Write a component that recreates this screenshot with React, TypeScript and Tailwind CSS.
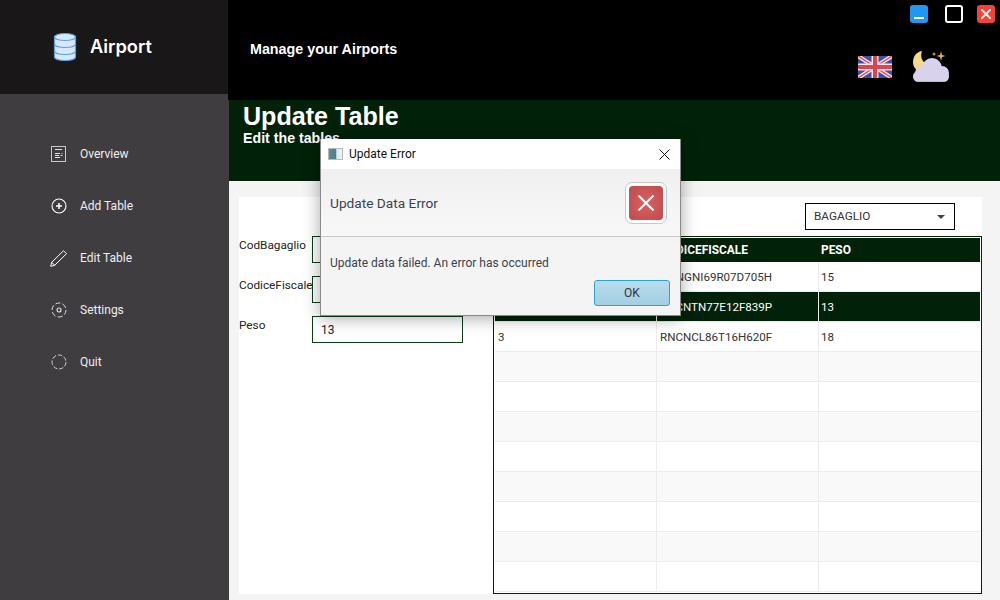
const rows = [
  { id: '', cf: 'GGNGNI69R07D705H', peso: '15' },
  { id: '', cf: 'RNCNTN77E12F839P', peso: '13', selected: true },
  { id: '3', cf: 'RNCNCL86T16H620F', peso: '18' },
  { id: '', cf: '', peso: '' },
  { id: '', cf: '', peso: '' },
  { id: '', cf: '', peso: '' },
  { id: '', cf: '', peso: '' },
  { id: '', cf: '', peso: '' },
  { id: '', cf: '', peso: '' },
  { id: '', cf: '', peso: '' },
  { id: '', cf: '', peso: '' },
]

function DbIcon() {
  return (
    <svg width="24" height="30" viewBox="0 0 24 30" fill="none">
      <path d="M1.500 5v20c0 2 4.500 3.500 10.500 3.500S22.500 27 22.500 25V5z" fill="#d6e8fb" stroke="#5f9fdc" strokeWidth="1.200" />
      <ellipse cx="12" cy="5" rx="10.500" ry="3.500" fill="#d6e8fb" stroke="#5f9fdc" strokeWidth="1.200" />
      <path d="M1.500 12c0 2 4.500 3.500 10.500 3.500S22.500 14 22.500 12M1.500 19c0 2 4.500 3.500 10.500 3.500S22.500 21 22.500 19" stroke="#5f9fdc" strokeWidth="1.200" />
    </svg>
  )
}

function MenuIcon({ name }: { name: string }) {
  if (name === 'Overview') {
    return (
      <svg width="16" height="17" viewBox="0 0 16 17" fill="none" stroke="#c9c9c9">
        <rect x="0.500" y="0.500" width="14" height="15" />
        <path d="M4 3.500h7M4 7.500h5M10.500 7.500h1M4 9.500h4M9.500 9.500h2M4 11.500h5" stroke="#e4e4e4" />
      </svg>
    )
  }
  if (name === 'Add Table') {
    return (
      <svg width="16" height="16" viewBox="0 0 16 16" fill="none" stroke="#fff">
        <circle cx="8" cy="8" r="7" strokeWidth="1.100" />
        <path d="M8 5v6M5 8h6" strokeWidth="1.500" />
      </svg>
    )
  }
  if (name === 'Edit Table') {
    return (
      <svg width="17" height="17" viewBox="0 0 17 17" fill="none" stroke="#fff" strokeWidth="1">
        <path d="M0.700 16.300l1-4L13.500 0.700l3 3L4.700 15.300z" />
        <path d="M1.700 12.300l3 3" />
      </svg>
    )
  }
  if (name === 'Settings') {
    return (
      <svg width="16" height="16" viewBox="0 0 16 16" fill="none" stroke="#dedede">
        <circle cx="8" cy="8" r="7" strokeDasharray="5 2.300" />
        <circle cx="8" cy="8" r="2" strokeWidth="1.200" />
      </svg>
    )
  }
  return (
    <svg width="16" height="16" viewBox="0 0 16 16" fill="none" stroke="#cfcfcf">
      <circle cx="8" cy="8" r="7" strokeDasharray="4.500 1.800" />
    </svg>
  )
}

function Flag() {
  return (
    <svg width="34" height="22" viewBox="0 0 34 22">
      <rect width="34" height="22" fill="#3f51a5" />
      <path d="M0 0l34 22M34 0L0 22" stroke="#f1dfe0" strokeWidth="4" />
      <path d="M0 0l34 22M34 0L0 22" stroke="#df4a55" strokeWidth="1.400" />
      <path d="M17 0v22M0 11h34" stroke="#f5e9e9" strokeWidth="7" />
      <path d="M17 0v22M0 11h34" stroke="#de4450" strokeWidth="4" />
    </svg>
  )
}

function NightCloud() {
  return (
    <svg width="38" height="34" viewBox="0 0 38 34">
      <path d="M10 1C4 2 1 7 1 12c0 5 3 8 6 9l8-7C10 12 8 7 10 1z" fill="#f6d98b" />
      <g fill="#d9d2ec">
        <circle cx="10" cy="23" r="7" />
        <circle cx="20" cy="18" r="10" />
        <circle cx="30" cy="23" r="7" />
        <rect x="1" y="21" width="36" height="11" rx="5.500" />
      </g>
      <path d="M5 31.500h28" stroke="#bdb4d6" strokeWidth="1" />
      <path d="M29 1l1 4 3.500 1-3.500 1-1 4-1-4-3.500-1 3.500-1z" fill="#e5b25f" />
      <circle cx="22" cy="4" r="1.500" fill="#b98a45" />
    </svg>
  )
}

export default function App() {
  return (
    <div className="relative flex h-[600px] w-[1000px] overflow-hidden bg-[#f4f4f4] font-['Roboto',sans-serif] text-[12px] text-[#333]">
      {/* Sidebar */}
      <div className="flex w-[229px] shrink-0 flex-col bg-[#403d40]">
        <div className="flex h-[94px] w-[228px] items-center gap-[13px] bg-[#1a1718] pl-[53px] pb-[1px]">
          <DbIcon />
          <span className="font-['Inter',sans-serif] text-[18.200px] font-semibold text-white">Airport</span>
        </div>
        <div className="flex flex-col pt-[34px]">
          {['Overview', 'Add Table', 'Edit Table', 'Settings', 'Quit'].map((name) => (
            <div key={name} className="flex h-[52px] items-center text-[#eeeeee]">
              <div className="flex w-[80px] justify-center pl-[37px]">
                <MenuIcon name={name} />
              </div>
              <span>{name}</span>
            </div>
          ))}
        </div>
      </div>

      <div className="flex flex-1 flex-col">
        {/* Top bar */}
        <div className="ml-[-1px] flex h-[100px] bg-black pl-[22px] font-['Liberation_Sans',sans-serif] text-white">
          <div className="pt-[41px] text-[14.300px] font-bold leading-[16px]">Manage your Airports</div>
          <div className="ml-auto flex flex-col items-end">
            <div className="flex items-center pt-[5px] pr-[5px]">
              <div className="flex h-[18px] w-[18px] items-end justify-center rounded-[3px] bg-[#2196f3] pb-[4px]">
                <div className="h-[2px] w-[10px] bg-white" />
              </div>
              <div className="ml-[17px] h-[18px] w-[18px] rounded-[3px] border-2 border-white" />
              <div className="ml-[14px] flex h-[18px] w-[18px] items-center justify-center rounded-[3px] bg-[#f44336]">
                <svg width="10" height="10" viewBox="0 0 10 10" stroke="#ffe9e7" strokeWidth="2">
                  <path d="M0 0l10 10M10 0L0 10" />
                </svg>
              </div>
            </div>
            <div className="flex items-start gap-[20px] pr-[50px] pt-[27px]">
              <div className="pt-[6px]">
                <Flag />
              </div>
              <NightCloud />
            </div>
          </div>
        </div>

        {/* Title band */}
        <div className="h-[81px] bg-[#012208] pl-[14px] pt-[3px] font-['Liberation_Sans',sans-serif] font-bold text-white">
          <div className="text-[25.100px] leading-[27px]">Update Table</div>
          <div className="text-[14.200px] leading-[17px]">Edit the tables</div>
        </div>

        {/* Content */}
        <div className="flex-1 px-[10px] pt-[16px]">
          <div className="flex h-[397px] w-[743px] bg-white">
            <div className="flex w-[254px] shrink-0 flex-col gap-[13px] pt-[39px]">
              {[
                ['CodBagaglio', ''],
                ['CodiceFiscale', ''],
                ['Peso', '13'],
              ].map(([label, value]) => (
                <div key={label} className="flex h-[27px] text-[#222]">
                  <span className="w-[73px] pt-[1px] text-[11.800px] leading-[16px]">{label}</span>
                  <div className="flex h-[27px] w-[151px] items-center border border-[#0b3d1a] pl-[8px]">{value}</div>
                </div>
              ))}
            </div>
            <div className="flex flex-1 flex-col">
              <div className="flex h-[39px] items-start justify-end pt-[6px] pr-[27px]">
                <div className="flex h-[27px] w-[150px] items-center justify-between border border-black pl-[8px] pr-[9px]">
                  <span className="text-[11.800px]">BAGAGLIO</span>
                  <div className="h-0 w-0 border-x-[4px] border-t-[4px] border-x-transparent border-t-[#444]" />
                </div>
              </div>
              <div className="h-[358px] w-[489px] overflow-hidden border border-[#04200c] p-[1px]">
                <div className="grid h-[24px] grid-cols-[162px_162px_161px] items-center bg-[#012208] pt-[1px] text-[11.900px] font-bold text-white">
                  <span className="pl-[3px]">CODBAGAGLIO</span>
                  <span className="pl-[3px]">CODICEFISCALE</span>
                  <span className="pl-[2px]">PESO</span>
                </div>
                {rows.map((row, i) => (
                  <div
                    key={i}
                    className={`grid h-[30px] grid-cols-[162px_162px_161px] text-[11.600px] ${
                      row.selected ? 'bg-[#012208] text-white' : i % 2 === 1 ? 'bg-[#f9f9f9]' : 'bg-white'
                    } border-b border-[#ececec]`}
                  >
                    <span className="border-r border-[#ececec] pl-[3px] leading-[31px]">{row.id}</span>
                    <span className="border-r border-[#ececec] pl-[3px] leading-[31px]">{row.cf}</span>
                    <span className="pl-[2px] leading-[31px]">{row.peso}</span>
                  </div>
                ))}
              </div>
            </div>
          </div>
        </div>
      </div>

      {/* Error dialog */}
      <div className="absolute left-[320px] top-[139px] flex h-[177px] w-[361px] flex-col border-b border-l border-r border-[#8a8a8a] bg-[#f4f4f4] shadow-[0_2px_16px_rgba(0,0,0,0.35)]">
        <div className="flex h-[30px] items-center bg-white pl-[7px] pr-[10px] text-[#111]">
          <div className="mr-[6px] h-[12px] w-[15px] border border-[#b8b8b8] bg-[linear-gradient(90deg,#5d8f86_0%,#4c7f99_50%,#dfe7e7_60%,#f2f2f2_100%)]" />
          <span>Update Error</span>
          <svg className="ml-auto" width="11" height="11" viewBox="0 0 11 11" stroke="#111" strokeWidth="1">
            <path d="M0.500 0.500l10 10M10.500 0.500l-10 10" />
          </svg>
        </div>
        <div className="flex h-[68px] items-center justify-between border-b border-[#c8c8c8] bg-[linear-gradient(#f0f0f0,#f8f8f8)] pl-[9px] pr-[13px]">
          <span className="pt-[1px] text-[13.700px] text-[#3a4250]">Update Data Error</span>
          <div className="flex h-[42px] w-[42px] items-center justify-center rounded-[7px] border border-[#c8c8c8] bg-white">
            <div className="flex h-[34px] w-[34px] items-center justify-center rounded-[4px] bg-[radial-gradient(#d96060,#bf4b4b)]">
              <svg width="16" height="16" viewBox="0 0 16 16" stroke="#fff" strokeWidth="2">
                <path d="M0.500 0.500l15 15M15.500 0.500l-15 15" />
              </svg>
            </div>
          </div>
        </div>
        <div className="flex flex-1 flex-col pl-[9px] pr-[10px] pt-[18px]">
          <span className="leading-[17px] text-[#3a4250]">Update data failed. An error has occurred</span>
          <div className="mt-[8px] flex h-[26px] w-[76px] items-center justify-center self-end rounded-[3px] border border-[#29a3dd] bg-[linear-gradient(#b9dceb,#a3cfe3)] text-[#333]">
            OK
          </div>
        </div>
      </div>
    </div>
  )
}
